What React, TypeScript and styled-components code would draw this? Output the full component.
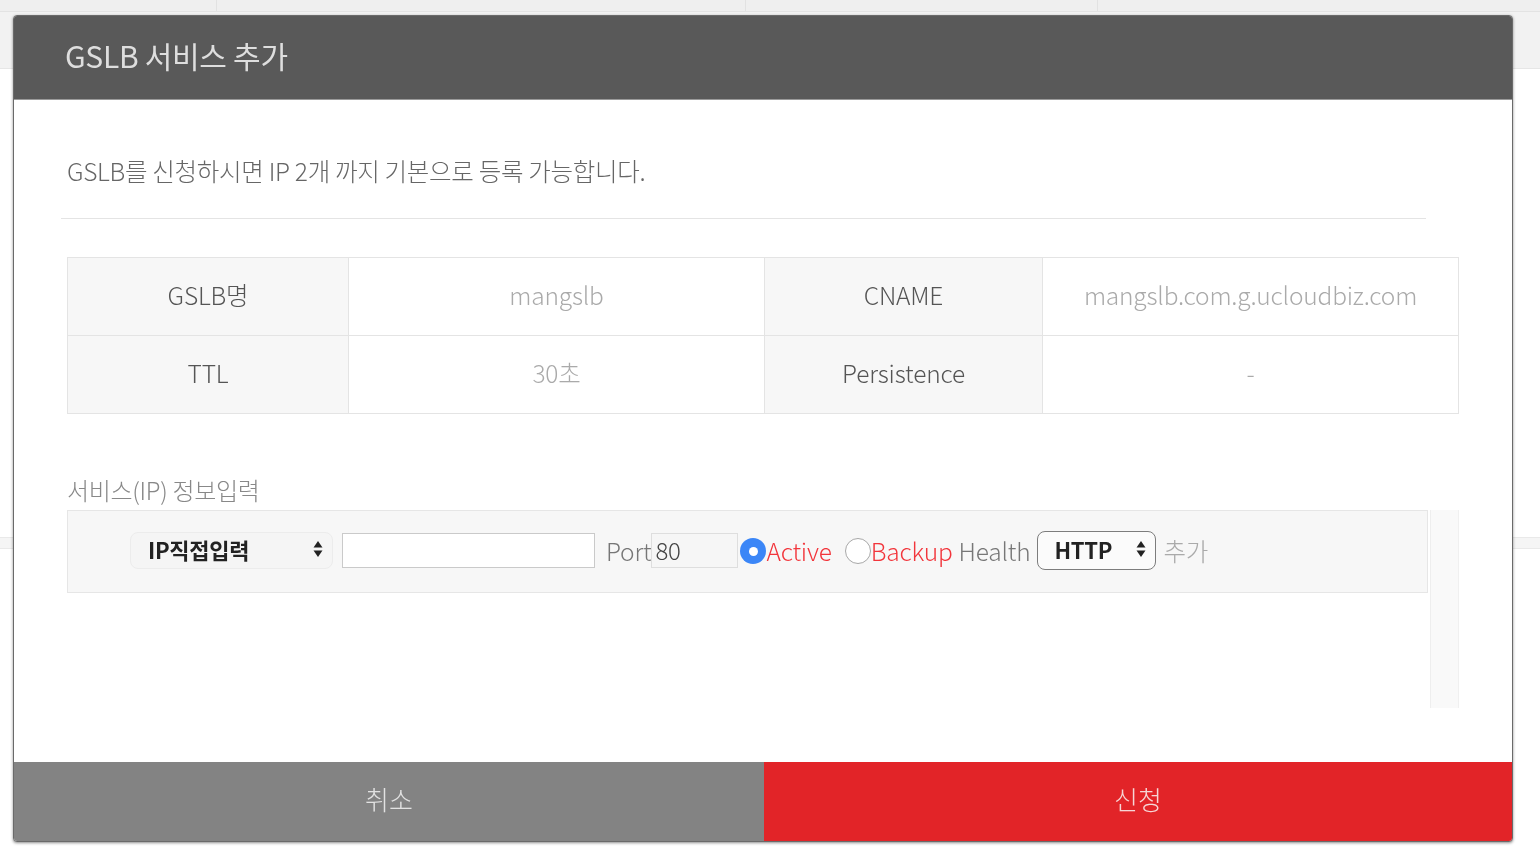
import React from "react";
import styled, { createGlobalStyle } from "styled-components";

const Global = createGlobalStyle`
  html, body { margin: 0; padding: 0; background: #fff; }
  body { font-family: "Noto Sans CJK KR", "Noto Sans", sans-serif; width: 1540px; height: 858px; overflow: hidden; }
  * { box-sizing: border-box; }
`;

const Backdrop = styled.div`
  width: 1540px;
  height: 858px;
  display: flex;
  flex-direction: column;
`;

const TopStrip = styled.div`
  height: 12px;
  background: #efefef;
  border-bottom: 1px solid #e3e3e3;
  display: grid;
  grid-template-columns: 217px 529px 352px 1fr;
`;

const TopCell = styled.div`
  border-right: 1px solid #e2e2e2;
  &:last-child { border-right: none; }
`;

const HeadBand = styled.div`
  height: 57px;
  background: #f2f2f2;
  border-bottom: 1px solid #e6e6e6;
`;

const MidBand = styled.div`
  margin-top: 468px;
  height: 12px;
  background: #f5f5f5;
  border-top: 1px solid #e9e9e9;
  border-bottom: 1px solid #e9e9e9;
`;

const Modal = styled.div`
  position: fixed;
  left: 13px;
  top: 15px;
  width: 1500px;
  height: 827px;
  display: flex;
  flex-direction: column;
  background: #fff;
  border: 1px solid #6a6a6a;
  border-radius: 4px;
  overflow: hidden;
  box-shadow: 0 1px 3px rgba(0, 0, 0, 0.45);
`;

const Header = styled.div`
  height: 84px;
  flex: none;
  background: #595959;
  border-bottom: 1px solid #9a9a9a;
  display: flex;
  align-items: center;
  padding: 0 0 5px 51px;
`;

const Title = styled.h2`
  margin: 0;
  font-size: 30px;
  font-weight: 400;
  color: #dedede;
  letter-spacing: -0.3px;
`;

const Body = styled.div`
  flex: 1;
  padding: 0 53px;
  display: flex;
  flex-direction: column;
`;

const Notice = styled.p`
  margin: 54px 0 0;
  font-size: 24.5px;
  line-height: 34px;
  font-weight: 300;
  color: #666;
  letter-spacing: -0.3px;
`;

const Divider = styled.hr`
  margin: 30px 33px 0 -6px;
  border: none;
  border-top: 1px solid #e4e4e4;
  height: 0;
`;

const InfoTable = styled.div`
  margin-top: 38px;
  display: grid;
  grid-template-columns: 281px 416px 278px 1fr;
  border-top: 1px solid #e4e4e4;
  border-left: 1px solid #e4e4e4;
`;

const Cell = styled.div<{ $label?: boolean }>`
  height: 78px;
  display: flex;
  align-items: center;
  justify-content: center;
  padding-bottom: 4px;
  border-right: 1px solid #e4e4e4;
  border-bottom: 1px solid #e4e4e4;
  background: ${(p) => (p.$label ? "#f7f7f7" : "#fff")};
  color: ${(p) => (p.$label ? "#555" : "#aaa")};
  font-size: 24.5px;
  font-weight: 300;
  letter-spacing: -0.2px;
`;

const SectionLabel = styled.div`
  margin-top: 60px;
  font-size: 24px;
  line-height: 32px;
  font-weight: 300;
  color: #888;
  letter-spacing: -0.3px;
`;

const ScrollArea = styled.div`
  margin-top: 4px;
  height: 198px;
  display: flex;
`;

const ScrollContent = styled.div`
  flex: 1;
`;

const ScrollTrack = styled.div`
  width: 29px;
  margin-left: 2px;
  background: #f9f9f9;
  border-left: 1px solid #eeeeee;
  border-right: 1px solid #f0f0f0;
`;

const IpRow = styled.div`
  height: 83px;
  background: #f7f7f7;
  border: 1px solid #e6e6e6;
  display: flex;
  align-items: center;
  padding: 0 0 3px 62px;
  font-size: 24.5px;
  font-weight: 300;
  letter-spacing: -0.2px;
`;

const Select = styled.div<{ $w: number; $h: number; $outlined?: boolean }>`
  width: ${(p) => p.$w}px;
  height: ${(p) => p.$h}px;
  flex: none;
  display: flex;
  align-items: center;
  justify-content: space-between;
  padding: 0 9px 2px 17px;
  border-radius: 8px;
  border: 1px solid ${(p) => (p.$outlined ? "#7d7d7d" : "#ececec")};
  background: ${(p) => (p.$outlined ? "#fbfbfb" : "#f5f5f5")};
  color: #222;
  font-weight: 700;
  font-size: 22px;
  letter-spacing: -0.3px;
`;

const TextBox = styled.div<{ $w: number; $muted?: boolean }>`
  width: ${(p) => p.$w}px;
  height: 35px;
  flex: none;
  background: ${(p) => (p.$muted ? "#f6f6f6" : "#fff")};
  border: 1px solid ${(p) => (p.$muted ? "#dedede" : "#cacaca")};
  display: flex;
  align-items: center;
  padding: 0 0 2px 3px;
  color: #444;
  font-size: 24px;
`;

const Label = styled.span<{ $color: string; $ml?: number }>`
  color: ${(p) => p.$color};
  margin-left: ${(p) => p.$ml ?? 0}px;
  white-space: nowrap;
`;

const Radio = styled.span<{ $checked?: boolean; $ml?: number }>`
  width: 26px;
  height: 26px;
  flex: none;
  margin-left: ${(p) => p.$ml ?? 0}px;
  margin-top: 2px;
  border-radius: 50%;
  display: flex;
  align-items: center;
  justify-content: center;
  background: ${(p) => (p.$checked ? "#3b86f7" : "#fff")};
  border: ${(p) => (p.$checked ? "none" : "1.5px solid #a8a8a8")};
  &::after {
    content: "";
    display: ${(p) => (p.$checked ? "block" : "none")};
    width: 9px;
    height: 9px;
    border-radius: 50%;
    background: #fff;
  }
`;

const Footer = styled.div`
  height: 79px;
  flex: none;
  display: grid;
  grid-template-columns: 750px 1fr;
`;

const FooterButton = styled.button<{ $primary?: boolean }>`
  border: none;
  margin: 0;
  padding: 0 0 6px;
  font-family: inherit;
  font-size: 26px;
  font-weight: 300;
  background: ${(p) => (p.$primary ? "#e22428" : "#838383")};
  color: ${(p) => (p.$primary ? "#f6d6d6" : "#e2e2e2")};
  display: flex;
  align-items: center;
  justify-content: center;
`;

const Arrows = () => (
  <svg width="10" height="18" viewBox="0 0 10 18">
    <path d="M5 1 L9.5 7.5 H0.5 Z" fill="#222" />
    <path d="M5 17 L9.5 10.5 H0.5 Z" fill="#222" />
  </svg>
);

const rows = [
  ["GSLB명", "mangslb", "CNAME", "mangslb.com.g.ucloudbiz.com"],
  ["TTL", "30초", "Persistence", "-"],
];

export default function App() {
  return (
    <>
      <Global />
      <Backdrop>
        <TopStrip>
          <TopCell />
          <TopCell />
          <TopCell />
          <TopCell />
        </TopStrip>
        <HeadBand />
        <MidBand />
      </Backdrop>
      <Modal>
        <Header>
          <Title>GSLB 서비스 추가</Title>
        </Header>
        <Body>
          <Notice>GSLB를 신청하시면 IP 2개 까지 기본으로 등록 가능합니다.</Notice>
          <Divider />
          <InfoTable>
            {rows.map((r) =>
              r.map((c, i) => (
                <Cell key={r[0] + i} $label={i % 2 === 0}>
                  {c}
                </Cell>
              ))
            )}
          </InfoTable>
          <SectionLabel>서비스(IP) 정보입력</SectionLabel>
          <ScrollArea>
            <ScrollContent>
              <IpRow>
                <Select $w={203} $h={37}>
                  <span>IP직접입력</span>
                  <Arrows />
                </Select>
                <TextBox $w={253} style={{ marginLeft: 9 }} />
                <Label $color="#777" $ml={11}>Port</Label>
                <TextBox $w={87} $muted>80</TextBox>
                <Radio $checked $ml={2} />
                <Label $color="#f2353b">Active</Label>
                <Radio $ml={13} />
                <Label $color="#f2353b">Backup</Label>
                <Label $color="#777" $ml={6}>Health</Label>
                <Select $w={119} $h={39} $outlined style={{ marginLeft: 6 }}>
                  <span>HTTP</span>
                  <Arrows />
                </Select>
                <Label $color="#aaa" $ml={8}>추가</Label>
              </IpRow>
            </ScrollContent>
            <ScrollTrack />
          </ScrollArea>
        </Body>
        <Footer>
          <FooterButton>취소</FooterButton>
          <FooterButton $primary>신청</FooterButton>
        </Footer>
      </Modal>
    </>
  );
}
